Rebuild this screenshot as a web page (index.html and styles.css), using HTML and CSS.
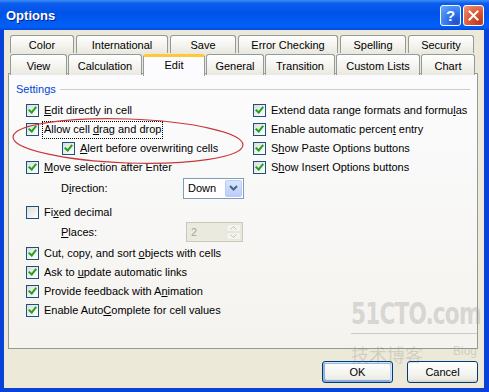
FILE: index.html
```html
<!DOCTYPE html>
<html lang="en">
<head>
    <meta charset="UTF-8">
    <meta name="viewport" content="width=device-width, initial-scale=1.0">
    <title>Options</title>
    <link rel="stylesheet" href="styles.css">
</head>
<body>
    <div class="window">
        <div class="titlebar">
            <span class="title">Options</span>
            <div class="caption-buttons">
                <div class="cap help">?</div>
                <div class="cap close">
                    <svg width="11" height="11" viewBox="0 0 11 11"><path d="M1.5 1.5 L9.5 9.5 M9.5 1.5 L1.5 9.5" stroke="#fff" stroke-width="2" stroke-linecap="square"/></svg>
                </div>
            </div>
        </div>

        <div class="client">
            <div class="tab-rows">
                <div class="tab-row back">
                    <div class="tab">Color</div>
                    <div class="tab">International</div>
                    <div class="tab">Save</div>
                    <div class="tab">Error Checking</div>
                    <div class="tab">Spelling</div>
                    <div class="tab">Security</div>
                </div>
                <div class="tab-row front">
                    <div class="tab">View</div>
                    <div class="tab">Calculation</div>
                    <div class="tab selected">Edit</div>
                    <div class="tab">General</div>
                    <div class="tab">Transition</div>
                    <div class="tab">Custom Lists</div>
                    <div class="tab">Chart</div>
                </div>
            </div>

            <div class="panel">
                <div class="group-title">
                    <span>Settings</span>
                    <div class="group-line"></div>
                </div>
                <div class="columns">
                    <div class="col col-left">
                        <div class="opt"><span class="box checked"></span><span class="label"><u>E</u>dit directly in cell</span></div>
                        <div class="opt"><span class="box checked"></span><span class="label focused">Allow cell <u>d</u>rag and drop</span></div>
                        <div class="opt indent"><span class="box checked"></span><span class="label"><u>A</u>lert before overwriting cells</span></div>
                        <div class="opt"><span class="box checked"></span><span class="label"><u>M</u>ove selection after Enter</span></div>
                        <div class="field-row direction">
                            <span class="field-label">D<u>i</u>rection:</span>
                            <div class="combo">
                                <span class="combo-text">Down</span>
                                <span class="combo-btn">
                                    <svg width="9" height="6" viewBox="0 0 9 6"><path d="M1 1 L4.5 4.5 L8 1" stroke="#4D6185" stroke-width="2" fill="none"/></svg>
                                </span>
                            </div>
                        </div>
                        <div class="opt"><span class="box"></span><span class="label">Fi<u>x</u>ed decimal</span></div>
                        <div class="field-row places">
                            <span class="field-label"><u>P</u>laces:</span>
                            <div class="spin">
                                <span class="spin-text">2</span>
                                <span class="spin-btns">
                                    <span class="spin-btn"><svg width="7" height="4" viewBox="0 0 7 4"><path d="M0.5 3.5 L3.5 0.5 L6.5 3.5" stroke="#C5C3B8" fill="none"/></svg></span>
                                    <span class="spin-btn"><svg width="7" height="4" viewBox="0 0 7 4"><path d="M0.5 0.5 L3.5 3.5 L6.5 0.5" stroke="#C5C3B8" fill="none"/></svg></span>
                                </span>
                            </div>
                        </div>
                        <div class="opt"><span class="box checked"></span><span class="label">Cut, copy, and sort <u>o</u>bjects with cells</span></div>
                        <div class="opt"><span class="box checked"></span><span class="label">Ask to <u>u</u>pdate automatic links</span></div>
                        <div class="opt"><span class="box checked"></span><span class="label">Provide feedback with A<u>n</u>imation</span></div>
                        <div class="opt"><span class="box checked"></span><span class="label">Enable Auto<u>C</u>omplete for cell values</span></div>
                    </div>
                    <div class="col col-right">
                        <div class="opt"><span class="box checked"></span><span class="label">Extend data range formats and formu<u>l</u>as</span></div>
                        <div class="opt"><span class="box checked"></span><span class="label">Enable automatic percen<u>t</u> entry</span></div>
                        <div class="opt"><span class="box checked"></span><span class="label">S<u>h</u>ow Paste Options buttons</span></div>
                        <div class="opt"><span class="box checked"></span><span class="label">S<u>h</u>ow Insert Options buttons</span></div>
                    </div>
                </div>
            </div>

            <div class="dialog-buttons">
                <div class="btn default">OK</div>
                <div class="btn">Cancel</div>
            </div>
        </div>

        <!-- hand drawn annotation -->
        <svg class="annotation" width="489" height="392" viewBox="0 0 489 392">
            <ellipse cx="128" cy="141" rx="115" ry="22" transform="rotate(2 128 141)" fill="none" stroke="#C8383A" stroke-width="1.2"/>
        </svg>

        <div class="watermark">
            <div class="wm-logo">51CTO.com</div>
            <div class="wm-line"></div>
            <div class="wm-sub"><span class="wm-cn">技术博客</span><span class="wm-blog">Blog</span></div>
        </div>
    </div>
</body>
</html>
```

FILE: styles.css
```css
body {
    margin: 0;
    font-family: "Liberation Sans", Arial, sans-serif;
    font-size: 11px;
    color: #000;
}
.window {
    position: relative;
    width: 489px;
    height: 392px;
    display: flex;
    flex-direction: column;
    background-color: #0842D8;
    overflow: hidden;
}
.titlebar {
    height: 30px;
    flex-shrink: 0;
    display: flex;
    align-items: center;
    justify-content: space-between;
    padding: 0 5px 0 6px;
    background: linear-gradient(to bottom, #3C8CF8 0%, #0A5CEC 12%, #0053E8 45%, #0060F8 85%, #005AF0 93%, #0845D6 100%);
}
.title {
    color: #fff;
    font-weight: bold;
    font-size: 13px;
    text-shadow: 1px 1px #0A1E8C;
    margin-top: 1px;
}
.caption-buttons {
    display: flex;
    gap: 2px;
}
.cap {
    width: 19px;
    height: 19px;
    border: 1px solid #fff;
    border-radius: 3px;
    display: flex;
    align-items: center;
    justify-content: center;
    color: #fff;
    font-weight: bold;
    font-size: 15px;
}
.help {
    background: radial-gradient(circle at 80% 85%, #1E4FCF 0%, #3479F0 45%, #6CA6FD 100%);
}
.close {
    background: radial-gradient(circle at 80% 85%, #C0381E 0%, #DE5A36 50%, #F09A80 100%);
}
.client {
    flex: 1;
    margin: 0 5px 4px 4px;
    padding-top: 5px;
    background-color: #ECE9D8;
    display: flex;
    flex-direction: column;
}
.tab-rows {
    padding-left: 6px;
}
.tab-row {
    display: grid;
    align-items: end;
}
.tab-row.back {
    grid-template-columns: 64px 92px 66px 100px 66px 66px;
    column-gap: 2px;
    height: 18px;
}
.tab-row.front {
    grid-template-columns: 57px 74px 62px 58px 70px 84px 54px;
    column-gap: 1px;
    height: 19px;
    margin-top: 1px;
    position: relative;
    z-index: 2;
}
.tab {
    height: 100%;
    box-sizing: border-box;
    border: 1px solid #919B9C;
    border-bottom: none;
    border-radius: 3px 3px 0 0;
    background: linear-gradient(to bottom, #FFFFFF, #F3F2EC 60%, #E9E8E1);
    display: flex;
    align-items: center;
    justify-content: center;
    padding-top: 1px;
}
.tab.selected {
    height: 22px;
    margin-bottom: -1px;
    padding-top: 0;
    padding-bottom: 3px;
    background: #FCFCFE;
    border-top: 3px solid #FFC83C;
}
.panel {
    margin-left: 4px;
    width: 470px;
    height: 276px;
    box-sizing: border-box;
    border: 1px solid #919B9C;
    background: linear-gradient(to bottom, #FCFCFE, #F4F3EE);
    padding: 8px 7px 0 7px;
}
.group-title {
    display: flex;
    align-items: center;
    height: 14px;
}
.group-title span {
    color: #0046D5;
}
.group-line {
    flex: 1;
    margin-left: 4px;
    border-top: 1px solid #D0D0BF;
}
.columns {
    display: flex;
    margin-top: 5px;
    padding-left: 10px;
}
.col-left {
    width: 227px;
    display: flex;
    flex-direction: column;
}
.col-right {
    display: flex;
    flex-direction: column;
}
.opt {
    display: flex;
    align-items: center;
    height: 19px;
}
.opt.indent {
    padding-left: 36px;
}
.box {
    position: relative;
    width: 13px;
    height: 13px;
    box-sizing: border-box;
    border: 1px solid #1C5180;
    background: linear-gradient(135deg, #DCDCD7, #FFFFFF);
    margin-right: 3px;
    flex-shrink: 0;
}
.box.checked::after {
    content: "";
    position: absolute;
    left: 3px;
    top: 0;
    width: 3px;
    height: 6px;
    border-right: 2px solid #21A121;
    border-bottom: 2px solid #21A121;
    transform: rotate(40deg);
}
.label {
    padding: 1px 1px 2px 1px;
    line-height: 13px;
    border: 1px solid transparent;
}
.label.focused {
    border: 1px dotted #000;
}
.field-row {
    display: flex;
    align-items: center;
    padding-left: 35px;
}
.direction {
    height: 22px;
    margin-bottom: 4px;
}
.direction .field-label {
    width: 122px;
}
.places {
    height: 20px;
    margin-bottom: 2px;
}
.places .field-label {
    width: 125px;
}
.combo {
    width: 61px;
    height: 21px;
    box-sizing: border-box;
    border: 1px solid #7F9DB9;
    background: #fff;
    display: flex;
    align-items: center;
    justify-content: space-between;
    padding: 1px;
}
.combo-text {
    padding-left: 3px;
}
.combo-btn {
    width: 17px;
    height: 17px;
    box-sizing: border-box;
    border-radius: 2px;
    border: 1px solid #B9CBF3;
    background: linear-gradient(to bottom, #D9E5FD, #B9CDF9);
    display: flex;
    align-items: center;
    justify-content: center;
}
.spin {
    width: 57px;
    height: 20px;
    box-sizing: border-box;
    border: 1px solid #C9C7BA;
    background: #EBEADF;
    display: flex;
    align-items: center;
    justify-content: space-between;
    padding: 1px;
}
.spin-text {
    color: #ACA899;
    padding-left: 3px;
}
.spin-btns {
    width: 15px;
    height: 16px;
    display: flex;
    flex-direction: column;
}
.spin-btn {
    flex: 1;
    border: 1px solid #E8E6DC;
    border-radius: 2px;
    background: #F4F3EE;
    display: flex;
    align-items: center;
    justify-content: center;
}
.dialog-buttons {
    display: flex;
    justify-content: flex-end;
    gap: 14px;
    margin-top: 12px;
    padding-right: 6px;
}
.btn {
    width: 71px;
    height: 22px;
    box-sizing: border-box;
    border: 1px solid #003C74;
    border-radius: 3px;
    background: linear-gradient(to bottom, #FFFFFF, #F3F3EF 60%, #ECEBE5 86%, #D6D0C5);
    display: flex;
    align-items: center;
    justify-content: center;
}
.btn.default {
    box-shadow: inset -1px 1px #CEE7FF, inset 1px 2px #98B8EA, inset -2px 2px #BCD4F6, inset 1px -1px #89ADE4, inset 2px -2px #89ADE4;
}
.annotation {
    position: absolute;
    left: 0;
    top: 0;
    pointer-events: none;
}
.watermark {
    position: absolute;
    left: 351px;
    top: 297px;
    width: 126px;
    pointer-events: none;
}
.wm-logo {
    font-family: "DejaVu Sans Condensed", "DejaVu Sans", sans-serif;
    font-weight: bold;
    font-size: 30px;
    letter-spacing: -1px;
    line-height: 34px;
    white-space: nowrap;
    color: rgba(165, 165, 165, 0.4);
    transform: scaleX(0.8);
    transform-origin: left center;
}
.wm-line {
    margin-top: 2px;
    border-top: 1px solid rgba(150, 150, 150, 0.45);
}
.wm-sub {
    display: flex;
    justify-content: space-between;
    align-items: flex-start;
    margin-top: 10px;
}
.wm-cn {
    font-family: "Noto Sans CJK SC", sans-serif;
    font-size: 18px;
    line-height: 20px;
    color: rgba(110, 110, 110, 0.22);
}
.wm-blog {
    font-size: 12px;
    color: rgba(130, 130, 130, 0.28);
}
```
